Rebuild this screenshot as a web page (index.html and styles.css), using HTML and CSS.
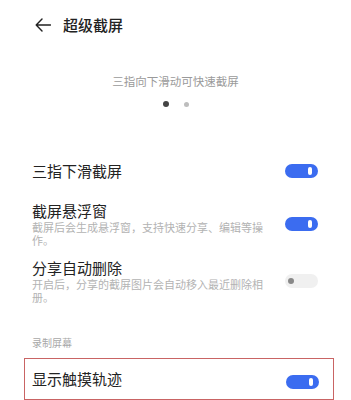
FILE: index.html
```html
<!DOCTYPE html>
<html lang="zh-CN">
<head>
    <meta charset="UTF-8">
    <meta name="viewport" content="width=device-width, initial-scale=1.0">
    <title>超级截屏</title>
    <link rel="stylesheet" href="styles.css">
</head>
<body>
    <!-- Шапка -->
    <div class="top-bar">
        <svg class="back-icon" width="16" height="14" viewBox="0 0 16 14">
            <path d="M7 1 L1.2 7 L7 13 M1.2 7 H15.5" fill="none" stroke="#222" stroke-width="1.4" stroke-linecap="round" stroke-linejoin="round"/>
        </svg>
        <div class="top-title">超级截屏</div>
    </div>

    <div class="hint">三指向下滑动可快速截屏</div>
    <div class="dots">
        <span class="dot active"></span>
        <span class="dot"></span>
    </div>

    <!-- Настройки -->
    <div class="item item-first">
        <div class="item-text">
            <div class="item-title">三指下滑截屏</div>
        </div>
        <div class="switch on"><span class="knob"></span></div>
    </div>

    <div class="item item-second">
        <div class="item-text">
            <div class="item-title">截屏悬浮窗</div>
            <div class="item-desc">截屏后会生成悬浮窗，支持快速分享、编辑等操作。</div>
        </div>
        <div class="switch on"><span class="knob"></span></div>
    </div>

    <div class="item item-third">
        <div class="item-text">
            <div class="item-title">分享自动删除</div>
            <div class="item-desc">开启后，分享的截屏图片会自动移入最近删除相册。</div>
        </div>
        <div class="switch off"><span class="knob"></span></div>
    </div>

    <div class="section-label">录制屏幕</div>

    <div class="item item-marked">
        <div class="item-text">
            <div class="item-title">显示触摸轨迹</div>
        </div>
        <div class="switch on"><span class="knob"></span></div>
    </div>
</body>
</html>
```

FILE: styles.css
```css
* {
    margin: 0;
    padding: 0;
    box-sizing: border-box;
    font-family: "Noto Sans CJK SC", "Noto Sans", sans-serif;
}

body {
    width: 351px;
    height: 400px;
    overflow: hidden;
    background-color: #fff;
    color: #222;
}

.top-bar {
    height: 50px;
    display: flex;
    align-items: center;
    padding-left: 35px;
}

.back-icon {
    display: block;
}

.top-title {
    margin-left: 12px;
    font-size: 15px;
    font-weight: 500;
    line-height: 20px;
}

.hint {
    margin-top: 23px;
    text-align: center;
    font-size: 11.5px;
    line-height: 16px;
    color: #9a9a9a;
}

.dots {
    margin-top: 12px;
    height: 6px;
    display: flex;
    justify-content: center;
    align-items: center;
    gap: 15px;
}

.dot {
    width: 5px;
    height: 5px;
    border-radius: 50%;
    background-color: #bdbdbd;
}

.dot.active {
    width: 6px;
    height: 6px;
    background-color: #444;
}

.item {
    display: flex;
    align-items: center;
    justify-content: space-between;
    padding: 0 33px 0 32px;
}

.item-first {
    margin-top: 54px;
}

.item-second {
    margin-top: 20px;
}

.item-third {
    margin-top: 11px;
}

.item-text {
    width: 236px;
}

.item-title {
    font-size: 15px;
    line-height: 20px;
}

.item-desc {
    font-size: 11px;
    line-height: 13px;
    color: #b3b3b3;
}

.section-label {
    margin-top: 32px;
    padding-left: 32px;
    font-size: 10px;
    line-height: 14px;
    color: #a8a8a8;
}

.item-marked {
    margin: 8px 17px 0 24px;
    height: 42px;
    padding: 0 14px 0 7px;
    border: 1.5px solid #c96464;
}

.item-marked .switch {
    margin-top: 5px;
}

.switch {
    width: 33px;
    height: 14px;
    border-radius: 7px;
    display: flex;
    align-items: center;
    flex-shrink: 0;
}

.switch.on {
    background-color: #3b6cf0;
    justify-content: flex-end;
    padding-right: 6px;
}

.switch.on .knob {
    width: 4px;
    height: 8px;
    border-radius: 2px;
    background-color: #fff;
}

.switch.off {
    background-color: #f0f0f0;
    padding-left: 3px;
}

.switch.off .knob {
    width: 6px;
    height: 6px;
    border-radius: 50%;
    background-color: #888;
}
```
